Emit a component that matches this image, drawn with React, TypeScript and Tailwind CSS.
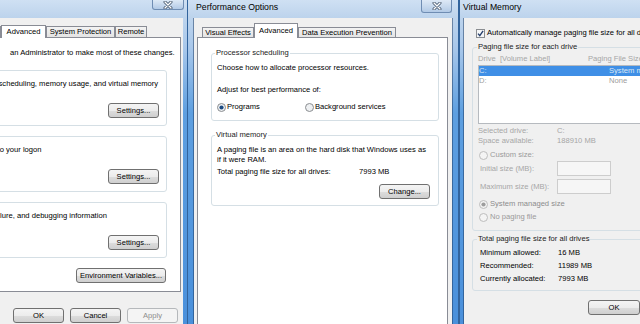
import type { ReactNode } from "react";

function CloseButton({ className }: { className: string }) {
  return (
    <div
      className={`flex shrink-0 items-center justify-center rounded-b-[3px] border border-t-0 border-[#6f8db3] bg-[linear-gradient(180deg,#dde9f6_0%,#c6d8ed_55%,#b2cae6_100%)] ${className}`}
    >
      <svg width="10" height="8" viewBox="0 0 10 8">
        <path d="M2 1L8 7M8 1L2 7" stroke="#44566d" strokeWidth="3" strokeLinecap="round" />
        <path d="M2 1L8 7M8 1L2 7" stroke="#ffffff" strokeWidth="1.4" strokeLinecap="round" />
      </svg>
    </div>
  );
}

function Frame({ className }: { className: string }) {
  return (
    <div
      className={`shrink-0 bg-[linear-gradient(180deg,#bdd4ed_0px,#a8c7ea_30px,#5e9fe0_95px,#4a90db_306px)] ${className}`}
    />
  );
}

function Btn({
  children,
  className,
  disabled = false,
}: {
  children: ReactNode;
  className: string;
  disabled?: boolean;
}) {
  return (
    <button
      type="button"
      className={`flex h-[15px] shrink-0 items-center justify-center rounded-[3px] border ${
        disabled
          ? "border-[#b5b8bb] bg-[#f4f4f4] text-[#8d8d8d]"
          : "border-[#707070] bg-[linear-gradient(180deg,#f4f4f4_0%,#ececec_50%,#dddddd_51%,#cfcfcf_100%)] text-black"
      } ${className}`}
    >
      {children}
    </button>
  );
}

function Tab({
  children,
  className,
  selected = false,
}: {
  children: ReactNode;
  className: string;
  selected?: boolean;
}) {
  return (
    <div
      className={`flex shrink-0 items-center justify-center overflow-hidden border border-b-0 border-[#898c95] ${
        selected
          ? "relative z-10 -mb-px bg-white"
          : "bg-[linear-gradient(180deg,#f3f3f3,#e4e4e4)]"
      } ${className}`}
    >
      {children}
    </div>
  );
}

function Group({
  legend,
  className,
  legendClass,
  children,
}: {
  legend: string;
  className: string;
  legendClass: string;
  children: ReactNode;
}) {
  return (
    <fieldset className={`min-w-0 shrink-0 rounded-[3px] border border-[#d5dfe5] ${className}`}>
      <legend className={`px-[1px] text-[#1b1b1b] ${legendClass}`}>{legend}</legend>
      {children}
    </fieldset>
  );
}

function Radio({ checked = false, disabled = false }: { checked?: boolean; disabled?: boolean }) {
  return (
    <svg width="9" height="9" viewBox="0 0 9 9" className="shrink-0">
      <circle
        cx="4.5"
        cy="4.5"
        r="4"
        fill={disabled ? "#f4f4f4" : "#eef0f2"}
        stroke={disabled ? "#bdbdbd" : "#8a8d91"}
      />
      {checked && <circle cx="4.5" cy="4.5" r="2.1" fill={disabled ? "#9d9d9d" : "#1d4b82"} />}
    </svg>
  );
}

function Checkbox() {
  return (
    <svg width="9" height="9" viewBox="0 0 9 9" className="shrink-0">
      <rect x="0.5" y="0.5" width="8" height="8" fill="#f5f6f7" stroke="#8a8d91" />
      <path d="M2 4.6L3.8 6.6L7.1 1.9" fill="none" stroke="#263f6c" strokeWidth="1.4" />
    </svg>
  );
}

function SystemProperties() {
  return (
    <div className="flex w-[187px] shrink-0 flex-col">
      <div className="flex h-[18px] shrink-0 justify-end bg-[linear-gradient(180deg,#cfe0f3_0%,#bcd3ec_100%)] pr-[3px]">
        <CloseButton className="h-[10px] w-[32px]" />
      </div>
      <div className="flex min-h-0 flex-1">
        <div className="flex w-[183px] shrink-0 flex-col overflow-hidden bg-[#f0f0f0]">
          <div className="-ml-[100px] w-[283px] shrink-0">
            <div className="mt-[7px] flex h-[12px] items-end pl-[4px]">
              <Tab className="h-[11px] w-[54px]">Computer Name</Tab>
              <Tab className="h-[11px] w-[43px]">Hardware</Tab>
              <Tab selected className="h-[13px] w-[45px]">
                Advanced
              </Tab>
              <Tab className="h-[11px] w-[69px]">System Protection</Tab>
              <Tab className="h-[11px] w-[32px]">Remote</Tab>
            </div>
            <div className="ml-[3px] flex h-[255px] w-[278px] flex-col border border-[#898c95] bg-white">
              <div className="mt-[10px] flex">
                <span className="w-[106px] shrink-0 overflow-hidden">You must be logged on as</span>
                <span>an Administrator to make most of these changes.</span>
              </div>

              <Group legend="Performance" legendClass="ml-[3px]" className="ml-[4px] mt-[7px] h-[61px] w-[259px]">
                <div className="pl-[5px] pt-[4px]">
                  Visual effects, processor scheduling, memory usage, and virtual memory
                </div>
                <div className="mt-[14px] flex justify-end pr-[7px]">
                  <Btn className="w-[51px]">Settings...</Btn>
                </div>
              </Group>

              <Group legend="User Profiles" legendClass="ml-[3px]" className="ml-[4px] mt-[5px] h-[61px] w-[259px]">
                <div className="pl-[5px] pt-[4px]">Desktop settings related to your logon</div>
                <div className="mt-[14px] flex justify-end pr-[7px]">
                  <Btn className="w-[51px]">Settings...</Btn>
                </div>
              </Group>

              <Group legend="Startup and Recovery" legendClass="ml-[3px]" className="ml-[4px] mt-[5px] h-[61px] w-[259px]">
                <div className="pl-[2px] pt-[4px]">
                  System startup, system failure, and debugging information
                </div>
                <div className="mt-[14px] flex justify-end pr-[7px]">
                  <Btn className="w-[51px]">Settings...</Btn>
                </div>
              </Group>

              <div className="mt-[10px] flex justify-end pr-[14px]">
                <Btn className="w-[90px]">Environment Variables...</Btn>
              </div>
            </div>
          </div>
          <div className="mt-[16px] flex justify-end gap-[6px] pr-[5px]">
            <Btn className="w-[51px]">OK</Btn>
            <Btn className="w-[51px]">Cancel</Btn>
            <Btn disabled className="w-[51px]">
              Apply
            </Btn>
          </div>
        </div>
        <Frame className="w-[4px]" />
      </div>
    </div>
  );
}

function PerformanceOptions() {
  return (
    <div className="flex w-[272px] shrink-0 flex-col border-x border-[rgba(25,55,95,0.5)]">
      <div className="flex h-[18px] shrink-0 items-start justify-between bg-[linear-gradient(180deg,#cfe0f3_0%,#bcd3ec_100%)] pl-[8px] pr-[6px]">
        <span className="mt-[1px] text-[8.7px] leading-[12px]">Performance Options</span>
        <CloseButton className="h-[13px] w-[31px]" />
      </div>
      <div className="flex min-h-0 flex-1">
        <Frame className="w-[6px] border-r border-[rgba(25,55,95,0.5)]" />
        <div className="flex w-[258px] shrink-0 flex-col overflow-hidden bg-[#f0f0f0]">
          <div className="mt-[5px] flex h-[14px] items-end pl-[8px]">
            <Tab className="h-[10px] w-[52px]">Visual Effects</Tab>
            <Tab selected className="h-[15px] w-[44px]">
              Advanced
            </Tab>
            <Tab className="h-[10px] w-[98px]">Data Execution Prevention</Tab>
          </div>
          <div className="ml-[3px] flex h-[300px] w-[251px] shrink-0 flex-col border border-[#898c95] bg-white">
            <Group
              legend="Processor scheduling"
              legendClass="ml-[3px]"
              className="ml-[13px] mt-[10px] h-[73px] w-[228px]"
            >
              <div className="pl-[5px] pt-[5px]">
                <div>Choose how to allocate processor resources.</div>
                <div className="mt-[12px]">Adjust for best performance of:</div>
                <div className="mt-[7px] flex h-[10px] items-center">
                  <div className="flex w-[88px] items-center gap-[1px]">
                    <Radio checked />
                    <span>Programs</span>
                  </div>
                  <div className="flex items-center gap-[1px]">
                    <Radio />
                    <span>Background services</span>
                  </div>
                </div>
              </div>
            </Group>

            <Group legend="Virtual memory" legendClass="ml-[3px]" className="ml-[13px] mt-[9px] h-[76px] w-[228px]">
              <div className="pl-[5px] pt-[5px]">
                <div>A paging file is an area on the hard disk that Windows uses as</div>
                <div>if it were RAM.</div>
                <div className="mt-[2px] flex">
                  <span className="w-[142px]">Total paging file size for all drives:</span>
                  <span>7993 MB</span>
                </div>
                <div className="mt-[7px] flex justify-end pr-[8px]">
                  <Btn className="w-[51px]">Change...</Btn>
                </div>
              </div>
            </Group>
          </div>
        </div>
        <Frame className="w-[6px] border-l border-[rgba(25,55,95,0.5)]" />
      </div>
    </div>
  );
}

function VirtualMemory() {
  return (
    <div className="flex min-w-0 flex-1 flex-col border-l border-[rgba(25,55,95,0.5)]">
      <div className="flex h-[18px] shrink-0 items-start bg-[linear-gradient(180deg,#cfe0f3_0%,#bcd3ec_100%)] pl-[3px]">
        <span className="mt-[1px] text-[8.7px] leading-[12px]">Virtual Memory</span>
      </div>
      <div className="flex min-h-0 flex-1">
        <Frame className="w-[4px] border-r border-[rgba(25,55,95,0.5)]" />
        <div className="flex min-w-0 flex-1 flex-col overflow-hidden bg-[#f0f0f0]">
          <div className="mt-[10px] flex h-[10px] items-center gap-[2px] pl-[12px]">
            <Checkbox />
            <span>Automatically manage paging file size for all drives</span>
          </div>

          <Group
            legend="Paging file size for each drive"
            legendClass="ml-[4px]"
            className="ml-[8px] mt-[4px] h-[189px] w-[300px]"
          >
            <div className="pl-[5px] pt-[2px]">
              <div className="flex h-[10px] text-[#a6a6a6]">
                <span className="w-[110px]">{"Drive\u00a0 [Volume Label]"}</span>
                <span>Paging File Size (MB)</span>
              </div>
              <div className="mt-[1px] h-[59px] w-[250px] border border-[#b6babf] bg-white">
                <div className="flex h-[10px] bg-[#3f8fe6] text-[#dce7f4]">
                  <span className="w-[130px]">C:</span>
                  <span>System managed</span>
                </div>
                <div className="flex h-[10px] text-[#9c9c9c]">
                  <span className="w-[130px]">D:</span>
                  <span>None</span>
                </div>
              </div>
              <div className="mt-[2px] text-[#a6a6a6]">
                <div className="flex">
                  <span className="w-[79px]">Selected drive:</span>
                  <span>C:</span>
                </div>
                <div className="flex">
                  <span className="w-[79px]">Space available:</span>
                  <span>188910 MB</span>
                </div>
              </div>
              <div className="mt-[4px] flex h-[10px] items-center gap-[2px] pl-[1px] text-[#9a9a9a]">
                <Radio disabled />
                <span>Custom size:</span>
              </div>
              <div className="mt-[1px] flex h-[15px] items-center pl-[2px] text-[#a6a6a6]">
                <span className="w-[77px]">Initial size (MB):</span>
                <div className="h-[15px] w-[54px] border border-[#cdcdcd] bg-[#f6f6f6]" />
              </div>
              <div className="mt-[3px] flex h-[15px] items-center pl-[2px] text-[#a6a6a6]">
                <span className="w-[77px]">Maximum size (MB):</span>
                <div className="h-[15px] w-[54px] border border-[#cdcdcd] bg-[#f6f6f6]" />
              </div>
              <div className="mt-[5px] flex h-[10px] items-center gap-[2px] pl-[1px] text-[#8c8c8c]">
                <Radio checked disabled />
                <span>System managed size</span>
              </div>
              <div className="mt-[3px] flex h-[10px] items-center gap-[2px] pl-[1px] text-[#9a9a9a]">
                <Radio disabled />
                <span>No paging file</span>
              </div>
            </div>
          </Group>

          <Group
            legend="Total paging file size for all drives"
            legendClass="ml-[4px]"
            className="ml-[8px] mt-[3px] h-[57px] w-[300px]"
          >
            <div className="flex flex-col gap-[3px] pl-[7px] pt-[4px]">
              <div className="flex">
                <span className="w-[78px]">Minimum allowed:</span>
                <span>16 MB</span>
              </div>
              <div className="flex">
                <span className="w-[78px]">Recommended:</span>
                <span>11989 MB</span>
              </div>
              <div className="flex">
                <span className="w-[78px]">Currently allocated:</span>
                <span>7993 MB</span>
              </div>
            </div>
          </Group>

          <div className="ml-[124px] mt-[9px] flex gap-[6px]">
            <Btn className="w-[52px]">OK</Btn>
            <Btn className="w-[52px]">Cancel</Btn>
          </div>
        </div>
      </div>
    </div>
  );
}

export default function App() {
  return (
    <div className="flex h-[324px] w-[640px] overflow-hidden whitespace-nowrap bg-[#4a90db] font-['Liberation_Sans',Arial,sans-serif] text-[7.6px] leading-[10px] text-black antialiased">
      <SystemProperties />
      <PerformanceOptions />
      <VirtualMemory />
    </div>
  );
}
